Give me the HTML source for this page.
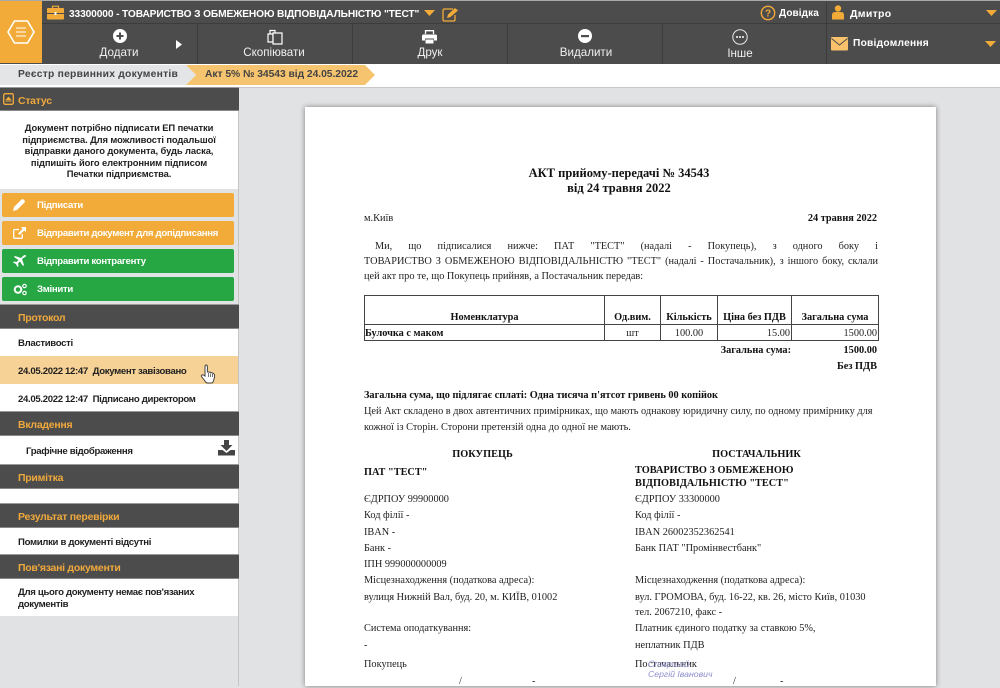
<!DOCTYPE html>
<html><head><meta charset="utf-8"><style>
html,body{margin:0;padding:0;width:1000px;height:686px;overflow:hidden;background:#e1e2e4;font-family:"Liberation Sans",sans-serif}
.a{position:absolute}
.t{position:absolute;white-space:nowrap}
.w{color:#fff;font-weight:bold;font-size:10.5px;line-height:14px}
.n{color:#f0f0f0;font-size:11.6px;line-height:14px;text-align:center}
.h{position:absolute;left:0;width:239px;background:#4c4c4c;border-top:1px solid #999;border-bottom:1px solid #888;box-sizing:border-box}
.h span{position:absolute;left:18px;top:6px;color:#f0a93c;font:bold 10.5px/14px "Liberation Sans",sans-serif;letter-spacing:-.27px;white-space:nowrap}
.wb{position:absolute;left:0;width:238px;background:#fff}
.s{position:absolute;white-space:nowrap;font:bold 9.6px/13px "Liberation Sans",sans-serif;color:#1f1f1f;letter-spacing:-.33px}
.b{position:absolute;left:2px;width:232px;height:24px;border-radius:2px}
.b span{position:absolute;left:35px;top:6px;color:#fff;font:bold 9.6px/14px "Liberation Sans",sans-serif;letter-spacing:-.3px;white-space:nowrap}
.b svg{position:absolute;left:11px;top:6px}
.o{background:#f2ab39}.g{background:#27a644}
.d{position:absolute;white-space:nowrap;font:10.3px/12px "Liberation Serif",serif;color:#222}
.db{font-weight:bold;color:#111}
.j{white-space:normal;text-align:justify;text-align-last:justify}
.c{position:absolute;background:#444}
</style></head><body>
<!-- top bar -->
<div class="a" style="left:0;top:0;width:1000px;height:1px;background:#aaa"></div>
<div class="a" style="left:0;top:1px;width:1000px;height:63px;background:#4c4c4c"></div>
<div class="a" style="left:42px;top:23px;width:958px;height:1px;background:#3c3c3c"></div>
<div class="a" style="left:0;top:1px;width:42px;height:62px;background:#f2ab39"></div>
<svg class="a" style="left:7px;top:19px" width="28" height="26" viewBox="0 0 28 26"><path d="M7.500 2H20.500L27 13L20.500 24H7.500L1 13Z" fill="none" stroke="#fff" stroke-width="1.600"/><path d="M9 9H19M9 13H19M9 17H19" stroke="#fff" stroke-width="1"/></svg>
<div class="a" style="left:197px;top:24px;width:1px;height:40px;background:#3c3c3c"></div>
<div class="a" style="left:352px;top:24px;width:1px;height:40px;background:#3c3c3c"></div>
<div class="a" style="left:507px;top:24px;width:1px;height:40px;background:#3c3c3c"></div>
<div class="a" style="left:662px;top:24px;width:1px;height:40px;background:#3c3c3c"></div>
<div class="a" style="left:826px;top:2px;width:1px;height:62px;background:#3c3c3c"></div>
<!-- briefcase -->
<svg class="a" style="left:47px;top:5px" width="17" height="15" viewBox="0 0 17 15"><path d="M5.500 3V1.200H11.500V3" fill="none" stroke="#f2ab39" stroke-width="1.200"/><rect x="0" y="3" width="17" height="11.500" rx="1" fill="#f2ab39"/><rect x="0" y="8" width="17" height="1" fill="#4c4c4c"/><rect x="7.500" y="7" width="2" height="3" fill="#fff"/></svg>
<div class="t w" style="left:69px;top:8px;font-size:10.200px;letter-spacing:-.12px">33300000 - ТОВАРИСТВО З ОБМЕЖЕНОЮ ВІДПОВІДАЛЬНІСТЮ "ТЕСТ"</div>
<svg class="a" style="left:424px;top:10px" width="11" height="6"><path d="M0 0H11L5.500 6Z" fill="#f2ab39"/></svg>
<svg class="a" style="left:442px;top:7px" width="17" height="15" viewBox="0 0 17 15"><path d="M11 2H2.500Q1 2 1 3.500V12.500Q1 14 2.500 14H11.500Q13 14 13 12.500V8" fill="none" stroke="#f2ab39" stroke-width="1.300"/><path d="M5 11L6 7.500L13 1L16 3.500L8.500 10Z" fill="#f2ab39"/></svg>
<svg class="a" style="left:760px;top:5px" width="16" height="16" viewBox="0 0 16 16"><circle cx="8" cy="8" r="6.700" fill="none" stroke="#f2ab39" stroke-width="1.400"/><text x="8" y="11.500" font-size="10" font-weight="bold" text-anchor="middle" fill="#f2ab39" font-family="Liberation Sans">?</text></svg>
<div class="t w" style="left:779px;top:7px;font-size:10px;letter-spacing:.1px">Довідка</div>
<svg class="a" style="left:832px;top:5px" width="12" height="15" viewBox="0 0 12 15"><circle cx="6" cy="3.500" r="3.200" fill="#f2ab39"/><path d="M0 14.500V10Q0 7 3 7H9Q12 7 12 10V14.500Z" fill="#f2ab39"/></svg>
<div class="t w" style="left:850px;top:7px;font-size:10.500px;letter-spacing:.3px">Дмитро</div>
<svg class="a" style="left:986px;top:10px" width="11" height="6"><path d="M0 0H11L5.500 6Z" fill="#f2ab39"/></svg>
<!-- toolbar -->
<svg class="a" style="left:113px;top:29px" width="14" height="14" viewBox="0 0 14 14"><circle cx="7" cy="7" r="7" fill="#fff"/><path d="M7 3.500V10.500M3.500 7H10.500" stroke="#4c4c4c" stroke-width="2"/></svg>
<div class="t n" style="left:89px;top:46px;width:60px">Додати</div>
<svg class="a" style="left:176px;top:40px" width="6" height="9"><path d="M0 0L6 4.500L0 9Z" fill="#fff"/></svg>
<svg class="a" style="left:267px;top:29px" width="16" height="16" viewBox="0 0 16 16"><path d="M1 5H6V13H1Z" fill="none" stroke="#fff" stroke-width="1.200"/><path d="M6 4H15V15H6Z" fill="#4c4c4c" stroke="#fff" stroke-width="1.200"/><path d="M3 5V1.500H8V4" fill="none" stroke="#fff" stroke-width="1.200"/></svg>
<div class="t n" style="left:234px;top:46px;width:80px">Скопіювати</div>
<svg class="a" style="left:422px;top:30px" width="15" height="14" viewBox="0 0 15 14"><path d="M3.500 4V0.700H11.500V4" fill="none" stroke="#fff" stroke-width="1.300"/><path d="M1.500 4.500H13.500Q15 4.500 15 6V10.500H12V8.500H3V10.500H0V6Q0 4.500 1.500 4.500Z" fill="#fff"/><rect x="3.500" y="9.500" width="8" height="4" fill="#fff"/></svg>
<div class="t n" style="left:400px;top:46px;width:60px">Друк</div>
<svg class="a" style="left:578px;top:29px" width="14" height="14" viewBox="0 0 14 14"><circle cx="7" cy="7" r="7" fill="#fff"/><rect x="3" y="6" width="8" height="2.200" fill="#4c4c4c"/></svg>
<div class="t n" style="left:556px;top:46px;width:60px">Видалити</div>
<svg class="a" style="left:732px;top:29px" width="16" height="16" viewBox="0 0 16 16"><circle cx="8" cy="8" r="7.200" fill="none" stroke="#e8e8e8" stroke-width="1"/><circle cx="5" cy="8" r="1" fill="#fff"/><circle cx="8" cy="8" r="1" fill="#fff"/><circle cx="11" cy="8" r="1" fill="#fff"/></svg>
<div class="t n" style="left:710px;top:47px;width:60px">Інше</div>
<svg class="a" style="left:831px;top:37px" width="17" height="14" viewBox="0 0 17 14"><rect width="17" height="13.500" rx="1" fill="#f7c26b"/><path d="M0.500 1.500L8.500 8L16.500 1.500" fill="none" stroke="#4c4c4c" stroke-width="1"/></svg>
<div class="t w" style="left:853px;top:37px;font-size:10.200px;letter-spacing:.25px">Повідомлення</div>
<svg class="a" style="left:985px;top:41px" width="11" height="6"><path d="M0 0H11L5.500 6Z" fill="#f2ab39"/></svg>
<!-- breadcrumb -->
<div class="a" style="left:0;top:64px;width:1000px;height:23px;background:#fff"></div>
<svg class="a" style="left:0;top:65px" width="380" height="20"><path d="M0 0H186L196 10L186 20H0Z" fill="#e4e5e7"/><path d="M186 0H365L375 10L365 20H186L196 10Z" fill="#f6c46f"/></svg>
<div class="t" style="left:18px;top:68px;font:bold 10.300px/14px 'Liberation Sans',sans-serif;color:#444;letter-spacing:.24px">Реєстр первинних документів</div>
<div class="t" style="left:205px;top:68px;font:bold 10.300px/14px 'Liberation Sans',sans-serif;color:#444;letter-spacing:-.04px">Акт 5% № 34543 від 24.05.2022</div>
<div class="a" style="left:239px;top:87px;width:761px;height:1px;background:#c8c8c8"></div>
<!-- sidebar -->
<div class="a" style="left:238px;top:87px;width:1px;height:599px;background:#c4c4c4"></div>
<div class="h" style="top:87px;height:24px;background:#4c4c4c"><span>Статус</span></div>
<svg class="a" style="left:3px;top:93px" width="11" height="12" viewBox="0 0 11 12"><rect x=".7" y=".7" width="9.600" height="10.600" rx="1.500" fill="none" stroke="#f2ab39" stroke-width="1.300"/><path d="M5.500 3.500L8.500 7H2.500Z M2.500 7.500H8.500V8.500H2.500Z" fill="#f2ab39"/></svg>
<div class="wb" style="top:111px;height:78px"></div>
<div class="s" style="left:0;top:122px;width:238px;text-align:center;font-size:9.400px;line-height:11.600px;letter-spacing:-.1px">Документ потрібно підписати ЕП печатки<br>підприємства. Для можливості подальшої<br>відправки даного документа, будь ласка,<br>підпишіть його електронним підписом<br>Печатки підприємства.</div>
<div class="b o" style="top:193px"><svg width="12" height="12" viewBox="0 0 12 12"><path d="M0 12L1 8L8.500 .5Q9.500 -.3 10.500 .5L11.500 1.500Q12.300 2.500 11.500 3.500L4 11Z" fill="#fff"/></svg><span>Підписати</span></div>
<div class="b o" style="top:221px"><svg width="13" height="12" viewBox="0 0 13 12"><path d="M6 2.500H2Q.7 2.500 .7 3.800V10Q.7 11.300 2 11.300H8Q9.300 11.300 9.300 10V7" fill="none" stroke="#fff" stroke-width="1.300"/><path d="M8 0H13V5L11.200 3.500L6.500 8L5 6.500L9.600 1.800Z" fill="#fff"/></svg><span>Відправити документ для допідписання</span></div>
<div class="b g" style="top:249px"><svg width="13" height="12" viewBox="0 0 13 12"><path d="M13 1Q13 0 12 0Q11 0 10 1L8 3L2 1L1 2L5.500 5L3.500 7L1 6.500L0 7.500L3 9L4.500 12L5.500 11L5 8.500L7 6.500L10 11L11 10L9 4L12 2Q13 1.500 13 1Z" fill="#fff"/></svg><span>Відправити контрагенту</span></div>
<div class="b g" style="top:277px"><svg width="14" height="13" viewBox="0 0 14 13"><circle cx="5" cy="6.500" r="3.300" fill="none" stroke="#fff" stroke-width="2"/><circle cx="11.500" cy="3" r="1.700" fill="none" stroke="#fff" stroke-width="1.200"/><circle cx="11.500" cy="10" r="1.700" fill="none" stroke="#fff" stroke-width="1.200"/></svg><span>Змінити</span></div>
<div class="h" style="top:304px;height:25px"><span>Протокол</span></div>
<div class="wb" style="top:329px;height:27px"></div>
<div class="s" style="left:18px;top:337px">Властивості</div>
<div class="a" style="left:0;top:356px;width:238px;height:28px;background:#f7d296"></div>
<div class="s" style="left:18px;top:365px">24.05.2022 12:47&nbsp; Документ завізовано</div>
<svg class="a" style="left:200px;top:364px" width="16" height="20" viewBox="0 0 16 20"><path d="M5 12V3Q5 1 6.200 1Q7.400 1 7.400 3V8L9 8L11 8.500L13.500 9.500Q15 10.500 14.500 13L13.500 17Q13 19 11 19H7.500Q6 19 5 17L1.500 12.500Q1 11.500 2 11Q3.500 10.500 5 12Z" fill="#fff" stroke="#444" stroke-width="1"/><path d="M8.500 9V13M10.500 9.500V13M12.500 10V13" stroke="#555" stroke-width=".8"/></svg>
<div class="wb" style="top:384px;height:27px"></div>
<div class="s" style="left:18px;top:393px">24.05.2022 12:47&nbsp; Підписано директором</div>
<div class="h" style="top:411px;height:25px"><span>Вкладення</span></div>
<div class="wb" style="top:436px;height:28px"></div>
<div class="s" style="left:26px;top:445px">Графічне відображення</div>
<svg class="a" style="left:218px;top:440px" width="17" height="16" viewBox="0 0 17 16"><path d="M6 0H11V5H14.500L8.500 11L2.500 5H6Z" fill="#444"/><path d="M0 10H4.500L8.500 13L12.500 10H17V15.500H0Z" fill="#444"/></svg>
<div class="h" style="top:464px;height:25px"><span>Примітка</span></div>
<div class="wb" style="top:489px;height:15px"></div>
<div class="h" style="top:503px;height:25px"><span>Результат перевірки</span></div>
<div class="wb" style="top:528px;height:27px"></div>
<div class="s" style="left:18px;top:536px">Помилки в документі відсутні</div>
<div class="h" style="top:554px;height:25px"><span>Пов'язані документи</span></div>
<div class="wb" style="top:579px;height:37px"></div>
<div class="s" style="left:18px;top:587px;line-height:12px">Для цього документу немає пов'язаних<br>документів</div>
<!-- document -->
<div class="a" style="left:305px;top:107px;width:631px;height:579px;background:#fff;box-shadow:0 0 5px rgba(0,0,0,.45)"></div>
<div class="d db" style="left:305px;top:166px;width:628px;text-align:center;font-size:12.500px;line-height:15px">АКТ прийому-передачі № 34543<br>від 24 травня 2022</div>
<div class="d" style="left:364px;top:213px">м.Київ</div>
<div class="d db" style="left:700px;top:213px;width:177px;text-align:right">24 травня 2022</div>
<div class="d j" style="left:375px;top:241px;width:503px">Ми, що підписалися нижче: ПАТ "ТЕСТ" (надалі - Покупець), з одного боку і</div>
<div class="d j" style="left:364px;top:256px;width:514px">ТОВАРИСТВО З ОБМЕЖЕНОЮ ВІДПОВІДАЛЬНІСТЮ "ТЕСТ" (надалі - Постачальник), з іншого боку, склали</div>
<div class="d" style="left:364px;top:271px">цей акт про те, що Покупець прийняв, а Постачальник передав:</div>
<!-- table -->
<div class="c" style="left:364px;top:295px;width:515px;height:1px"></div>
<div class="c" style="left:364px;top:324px;width:515px;height:1px"></div>
<div class="c" style="left:364px;top:340px;width:515px;height:1px"></div>
<div class="c" style="left:364px;top:295px;width:1px;height:46px"></div>
<div class="c" style="left:604px;top:295px;width:1px;height:46px"></div>
<div class="c" style="left:660px;top:295px;width:1px;height:46px"></div>
<div class="c" style="left:717px;top:295px;width:1px;height:46px"></div>
<div class="c" style="left:791px;top:295px;width:1px;height:46px"></div>
<div class="c" style="left:878px;top:295px;width:1px;height:46px"></div>
<div class="d db" style="left:365px;top:312px;width:239px;text-align:center">Номенклатура</div>
<div class="d db" style="left:605px;top:312px;width:55px;text-align:center">Од.вим.</div>
<div class="d db" style="left:661px;top:312px;width:56px;text-align:center">Кількість</div>
<div class="d db" style="left:718px;top:312px;width:73px;text-align:center">Ціна без ПДВ</div>
<div class="d db" style="left:792px;top:312px;width:86px;text-align:center">Загальна сума</div>
<div class="d db" style="left:365px;top:328px">Булочка с маком</div>
<div class="d" style="left:605px;top:328px;width:55px;text-align:center">шт</div>
<div class="d" style="left:661px;top:328px;width:56px;text-align:center">100.00</div>
<div class="d" style="left:718px;top:328px;width:72px;text-align:right">15.00</div>
<div class="d" style="left:792px;top:328px;width:85px;text-align:right">1500.00</div>
<div class="d db" style="left:640px;top:345px;width:151px;text-align:right">Загальна сума:</div>
<div class="d db" style="left:793px;top:345px;width:84px;text-align:right">1500.00</div>
<div class="d db" style="left:793px;top:361px;width:84px;text-align:right">Без ПДВ</div>
<div class="d db" style="left:364px;top:390px">Загальна сума, що підлягає сплаті: Одна тисяча п'ятсот гривень 00 копійок</div>
<div class="d" style="left:364px;top:406px">Цей Акт складено в двох автентичних примірниках, що мають однакову юридичну силу, по одному примірнику для</div>
<div class="d" style="left:364px;top:422px">кожної із Сторін. Сторони претензій одна до одної не мають.</div>
<div class="d db" style="left:364px;top:449px;width:237px;text-align:center">ПОКУПЕЦЬ</div>
<div class="d db" style="left:635px;top:449px;width:243px;text-align:center">ПОСТАЧАЛЬНИК</div>
<div class="d db" style="left:364px;top:467px">ПАТ "ТЕСТ"</div>
<div class="d db" style="left:635px;top:465px;line-height:12.500px">ТОВАРИСТВО З ОБМЕЖЕНОЮ<br>ВІДПОВІДАЛЬНІСТЮ "ТЕСТ"</div>
<div class="d" style="left:364px;top:494px">ЄДРПОУ 99900000</div>
<div class="d" style="left:364px;top:510px">Код філії -</div>
<div class="d" style="left:364px;top:527px">IBAN -</div>
<div class="d" style="left:364px;top:543px">Банк -</div>
<div class="d" style="left:364px;top:559px">ІПН 999000000009</div>
<div class="d" style="left:364px;top:575px">Місцезнаходження (податкова адреса):</div>
<div class="d" style="left:364px;top:592px">вулиця Нижній Вал, буд. 20, м. КИЇВ, 01002</div>
<div class="d" style="left:364px;top:623px">Система оподаткування:</div>
<div class="d" style="left:364px;top:640px">-</div>
<div class="d" style="left:364px;top:659px">Покупець</div>
<div class="d" style="left:635px;top:494px">ЄДРПОУ 33300000</div>
<div class="d" style="left:635px;top:510px">Код філії -</div>
<div class="d" style="left:635px;top:527px">IBAN 26002352362541</div>
<div class="d" style="left:635px;top:543px">Банк ПАТ "Промінвестбанк"</div>
<div class="d" style="left:635px;top:575px">Місцезнаходження (податкова адреса):</div>
<div class="d" style="left:635px;top:592px">вул. ГРОМОВА, буд. 16-22, кв. 26, місто Київ, 01030</div>
<div class="d" style="left:635px;top:607px">тел. 2067210, факс -</div>
<div class="d" style="left:635px;top:623px">Платник єдиного податку за ставкою 5%,</div>
<div class="d" style="left:635px;top:640px">неплатник ПДВ</div>
<div class="d" style="left:635px;top:659px">Постачальник</div>
<div class="d" style="left:459px;top:676px">/</div>
<div class="d" style="left:532px;top:676px">-</div>
<div class="d" style="left:733px;top:676px">/</div>
<div class="d" style="left:780px;top:676px">-</div>
<div class="t" style="left:648px;top:658px;font:9px/12px 'Liberation Sans',sans-serif;color:#a5a5dc;font-style:italic">Старший</div>
<div class="t" style="left:648px;top:668px;font:8.700px/12px 'Liberation Sans',sans-serif;color:#8d8dcc;font-style:italic">Сергій Іванович</div>
</body></html>
